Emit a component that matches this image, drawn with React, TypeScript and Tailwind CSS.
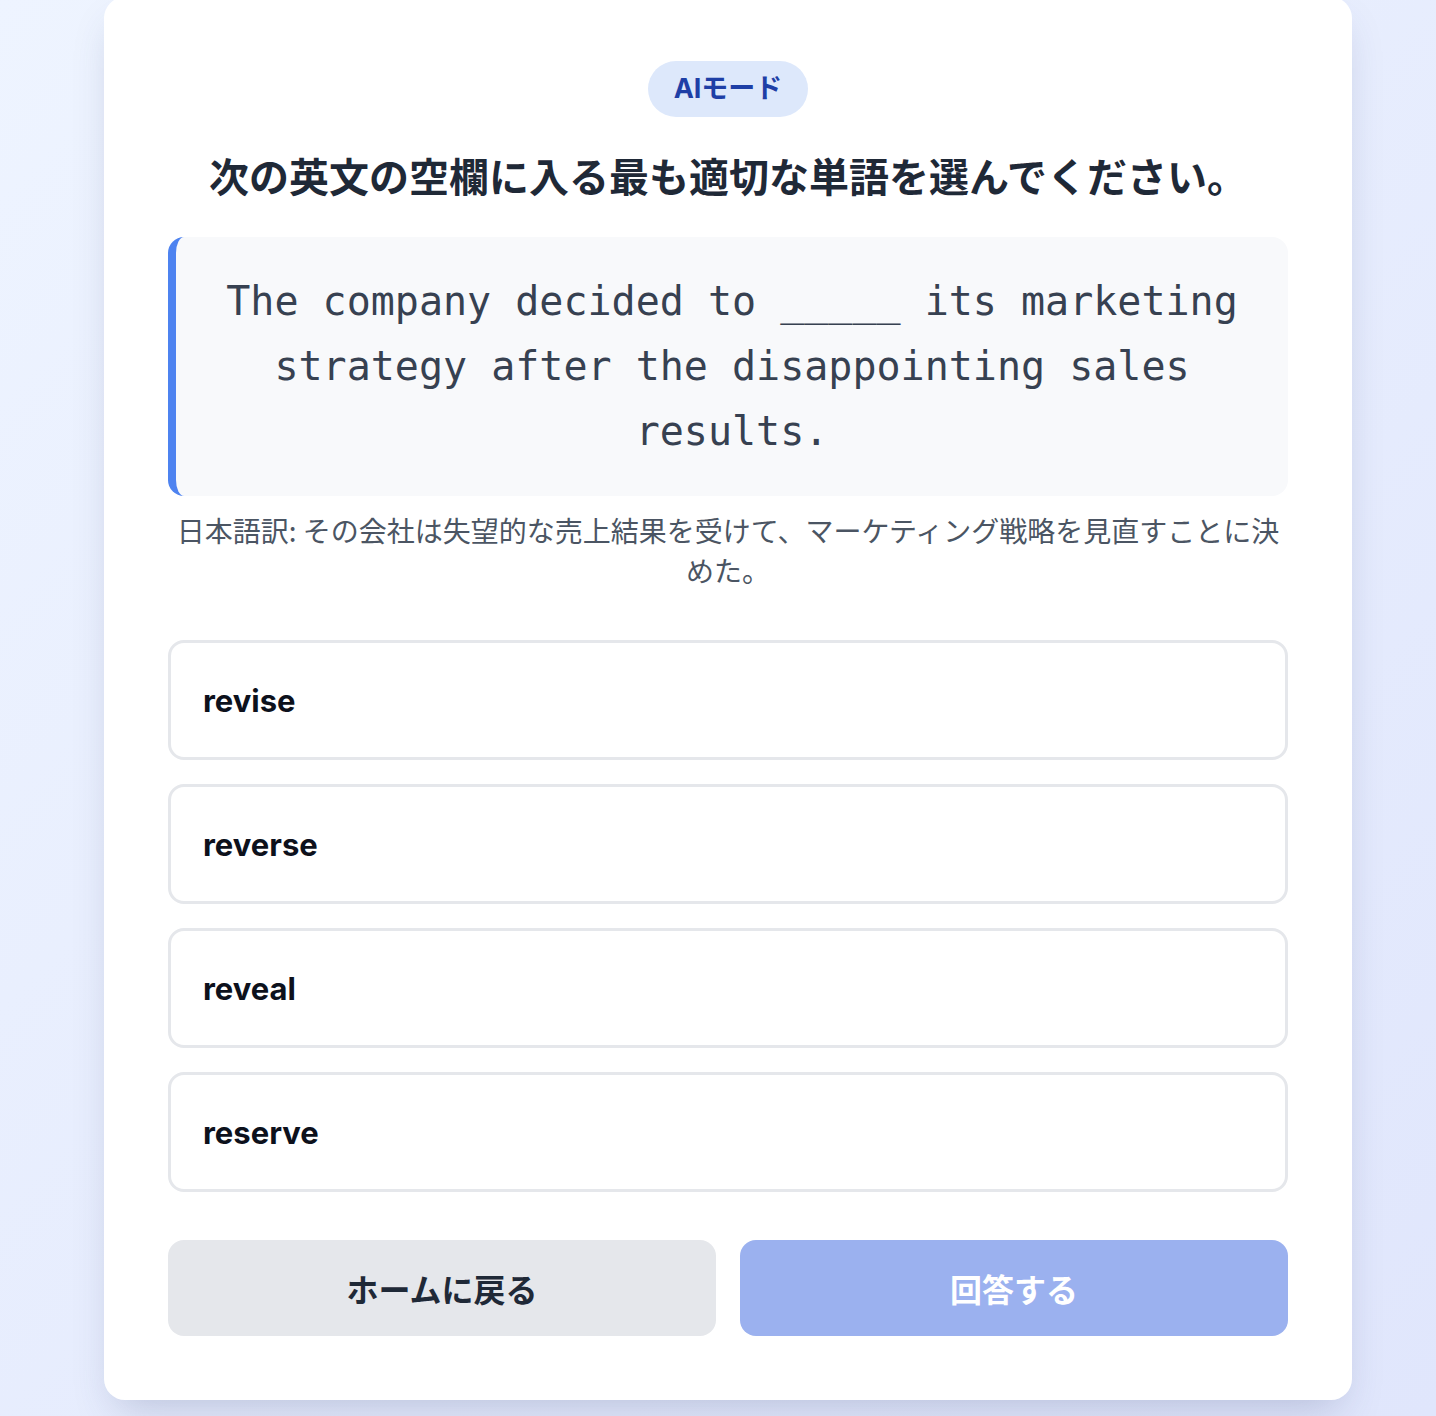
const options = ['revise', 'reverse', 'reveal', 'reserve'];

export default function App() {
  return (
    <div
      className="min-h-screen bg-linear-to-br from-[#eef4ff] to-[#e0e6fc] pb-[17px] pl-5"
      style={{ fontFamily: 'Inter, "Noto Sans CJK JP", sans-serif' }}
    >
      <div className="mx-auto mt-[-3px] w-[1248px] rounded-[21px] bg-white px-16 pt-16 pb-16 shadow-[0_20px_40px_-12px_rgba(60,70,120,0.25)]">
        {/* Mode badge */}
        <div className="flex justify-center">
          <span className="flex h-[56px] w-[160px] items-center justify-center rounded-full bg-[#dde8fb] text-[27px] font-bold text-[#1e3fa6]">
            AIモード
          </span>
        </div>

        <h1
          className="mt-[33px] text-center text-[40px] leading-[50px] font-bold text-[#1f2937]"
          style={{ fontFamily: '"Noto Sans CJK JP", sans-serif' }}
        >
          次の英文の空欄に入る最も適切な単語を選んでください。
        </h1>

        {/* Sentence */}
        <div className="mt-[37px] rounded-[16px] border-l-[8px] border-[#4e83f0] bg-[#f8f9fb] px-8 py-8">
          <p
            className="text-center text-[40px] leading-[65px] text-[#374151]"
            style={{ fontFamily: '"DejaVu Sans Mono", monospace' }}
          >
            The company decided to _____ its marketing strategy after the disappointing sales results.
          </p>
        </div>

        <p
          className="mt-[14px] text-center text-[28px] leading-[40px] text-[#4b5563]"
          style={{ fontFamily: '"Noto Sans CJK JP", sans-serif' }}
        >
          日本語訳: その会社は失望的な売上結果を受けて、マーケティング戦略を見直すことに決めた。
        </p>

        {/* Choices */}
        <div className="mt-[50px] flex flex-col gap-[24px]">
          {options.map((o) => (
            <button
              key={o}
              className="flex h-[120px] w-full items-center rounded-[16px] border-[3px] border-[#e5e7eb] bg-white px-8 pt-[2px] text-left text-[31px] font-bold text-[#0d111c]"
            >
              {o}
            </button>
          ))}
        </div>

        {/* Actions */}
        <div
          className="mt-[48px] grid grid-cols-2 gap-6"
          style={{ fontFamily: '"Noto Sans CJK JP", sans-serif' }}
        >
          <button className="h-[96px] rounded-[16px] bg-[#e5e7eb] text-[32px] font-bold text-[#1f2937]">
            ホームに戻る
          </button>
          <button disabled className="h-[96px] rounded-[16px] bg-[#9bb1ef] text-[32px] font-bold text-white">
            回答する
          </button>
        </div>
      </div>
    </div>
  );
}
